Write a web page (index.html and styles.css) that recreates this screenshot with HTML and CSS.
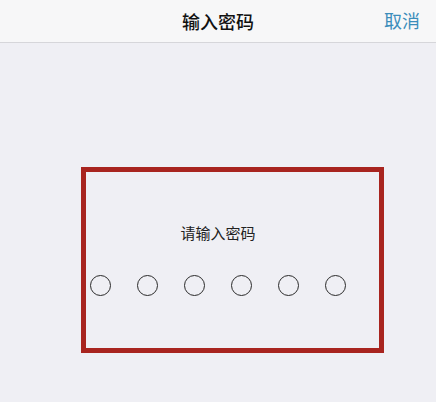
FILE: index.html
```html
<!DOCTYPE html>
<html lang="zh">
<head>
<meta charset="utf-8">
<link rel="stylesheet" href="styles.css">
</head>
<body>
<div class="page">
  <header class="nav">
    <div class="nav-title">输入密码</div>
    <div class="nav-cancel">取消</div>
  </header>
  <main class="content">
    <div class="prompt">请输入密码</div>
    <div class="dots">
      <span class="dot"></span><span class="dot"></span><span class="dot"></span>
      <span class="dot"></span><span class="dot"></span><span class="dot"></span>
    </div>
    <div class="highlight"></div>
  </main>
</div>
</body>
</html>
```
FILE: styles.css
```css
html, body {
  margin: 0;
  padding: 0;
}
body {
  width: 436px;
  height: 402px;
  background: #efeff4;
  font-family: "Noto Sans CJK SC", "Noto Sans", sans-serif;
  overflow: hidden;
}
.page {
  position: relative;
  height: 402px;
}
.nav {
  position: relative;
  height: 42px;
  background: #f7f7f8;
  border-bottom: 1px solid #d6d6da;
  display: flex;
  align-items: center;
  justify-content: center;
}
.nav-title {
  font-size: 18px;
  color: #111;
  font-weight: 500;
}
.nav-cancel {
  position: absolute;
  right: 16px;
  top: 0;
  line-height: 40px;
  font-size: 18px;
  color: #3b8dbb;
}
.content {
  display: flex;
  flex-direction: column;
  align-items: center;
  padding-top: 179px;
}
.prompt {
  font-size: 15px;
  line-height: 22px;
  color: #222;
}
.dots {
  display: flex;
  gap: 26px;
  margin-top: 31px;
}
.dot {
  box-sizing: border-box;
  width: 21px;
  height: 21px;
  border: 1.5px solid #2a2a2a;
  border-radius: 50%;
}
.highlight {
  position: absolute;
  left: 81px;
  top: 167px;
  width: 293px;
  height: 176px;
  border: 5px solid #a8241f;
}
```
